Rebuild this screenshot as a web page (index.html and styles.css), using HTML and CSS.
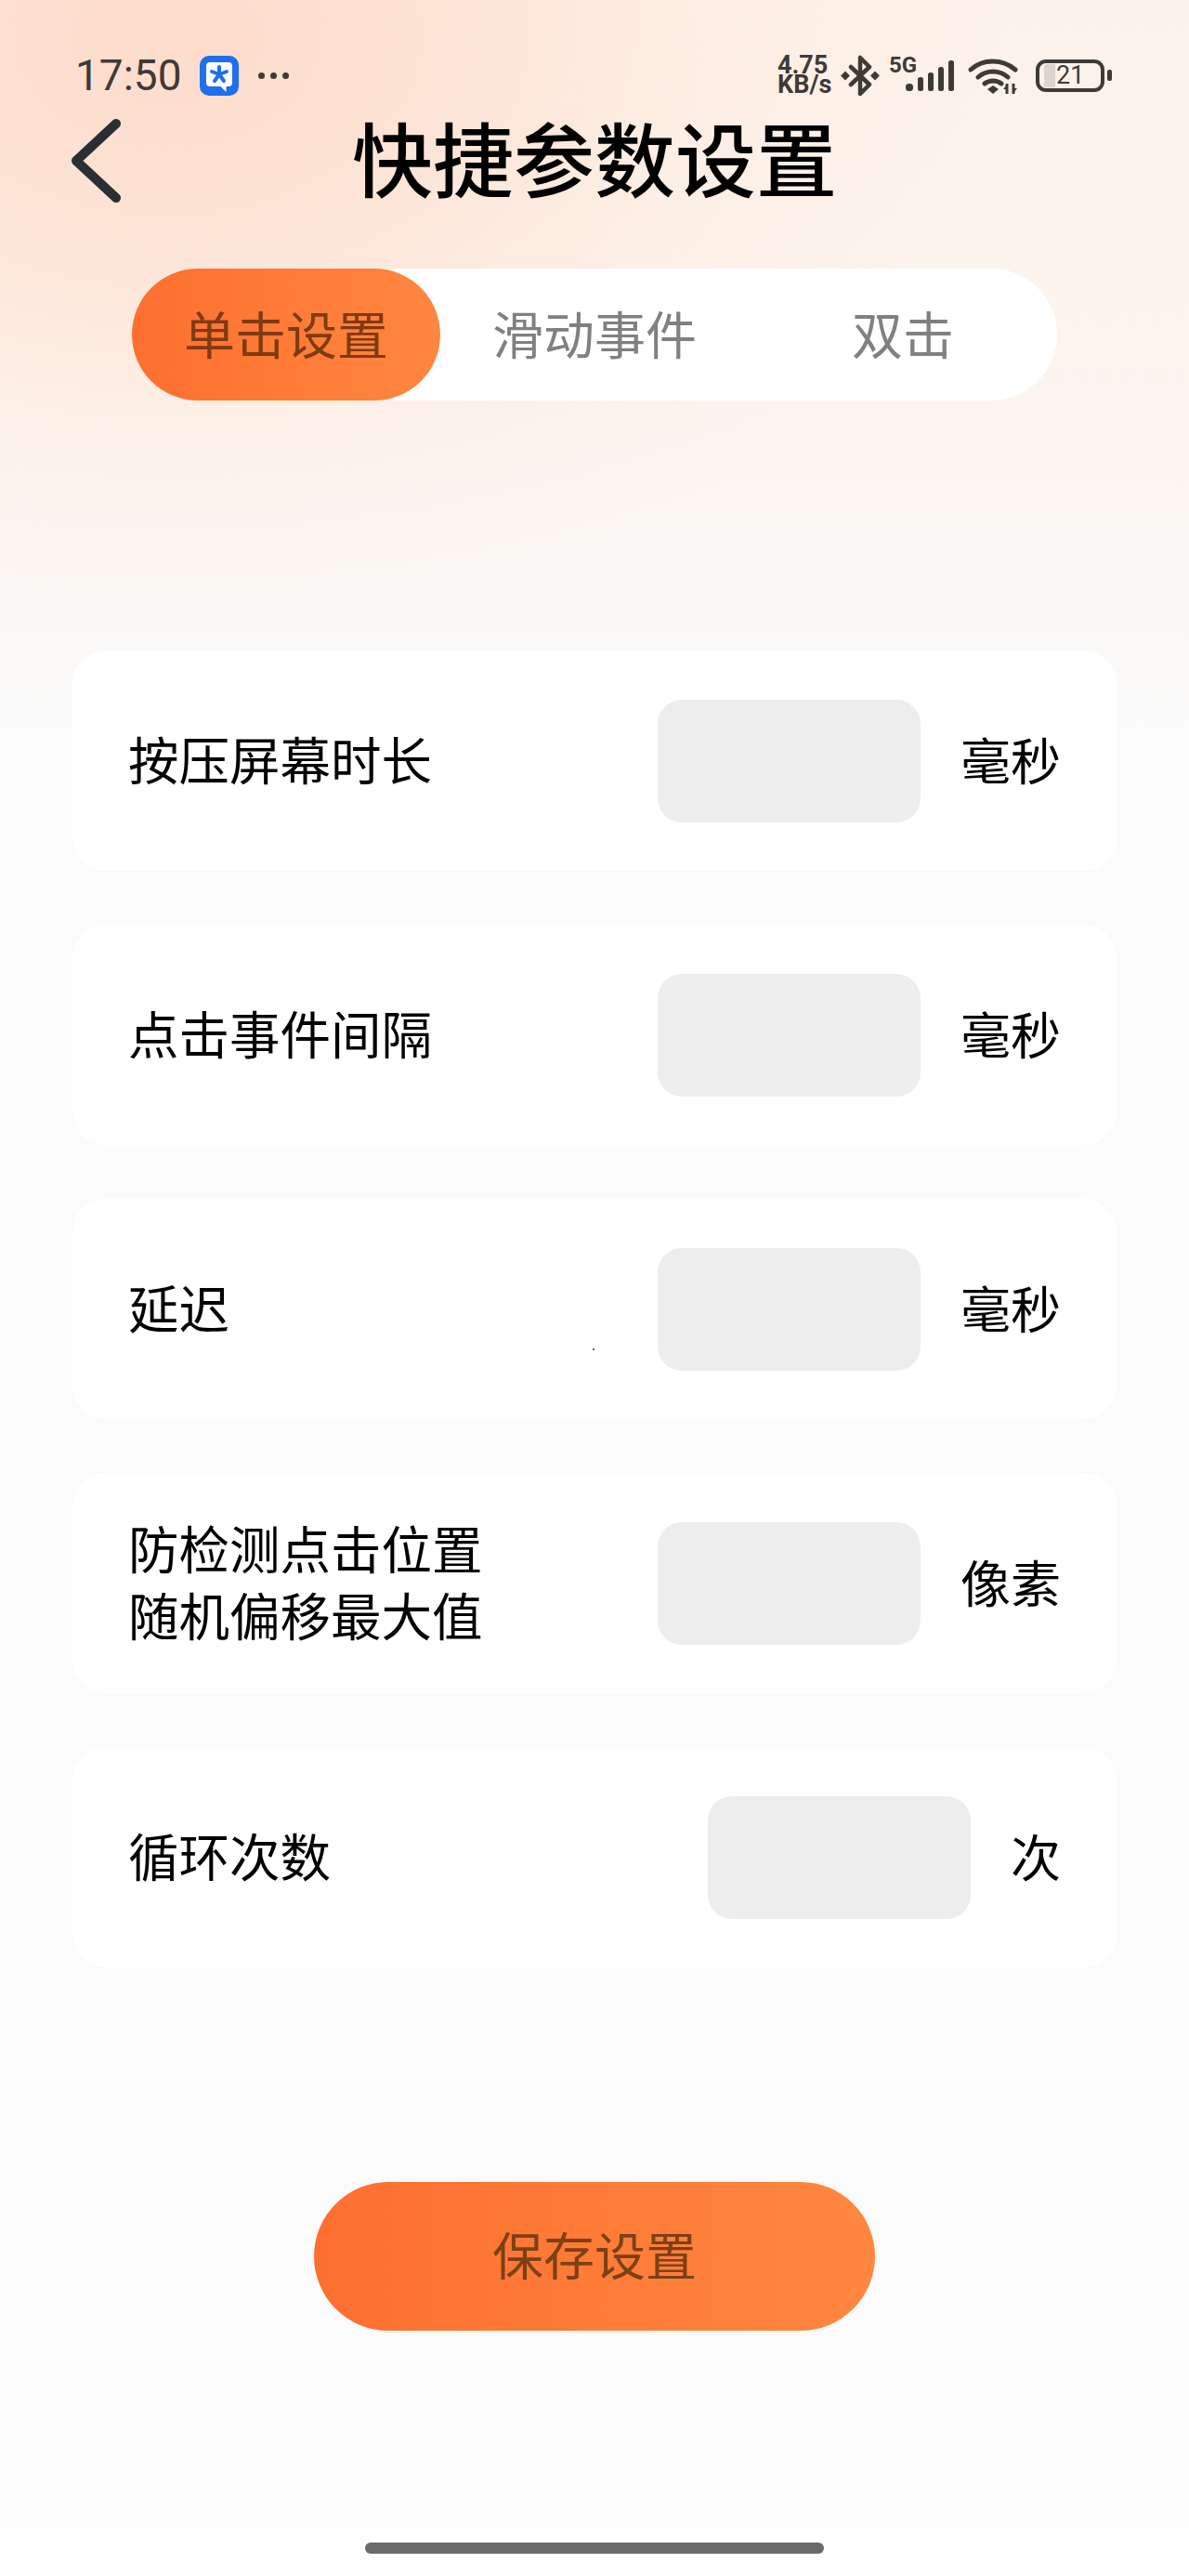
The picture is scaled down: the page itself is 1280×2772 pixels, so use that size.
FILE: index.html
```html
<!DOCTYPE html>
<html lang="zh-CN">
  <head>
    <meta charset="UTF-8" />
    <meta name="viewport" content="width=device-width, initial-scale=1.0" />
    <title>快捷参数设置</title>
    <link rel="stylesheet" href="styles.css">
  </head>
  <body>
    <div class="page">
      <div class="status-bar">
        <div class="status-left">
          <span class="time">17:50</span>
          <svg class="app-icon" viewBox="0 0 42 43">
            <rect width="42" height="43" rx="10" fill="#1f6fee" />
            <path d="M11 7h20a4 4 0 0 1 4 4v18a4 4 0 0 1-4 4h-2.500v6l-6-6H11a4 4 0 0 1-4-4V11a4 4 0 0 1 4-4z" fill="#fff" />
            <path d="M21 20v-8M21 20l-8-3M21 20l8-3M21 20l-5 7M21 20l5 7" stroke="#1f6fee" stroke-width="4" stroke-linecap="round" />
          </svg>
          <span class="dots"><i></i><i></i><i></i></span>
        </div>
        <div class="status-right">
          <span class="speed">4.75<br />KB/s</span>
          <svg class="bluetooth" viewBox="0 0 42 45">
            <path d="M21 3v39l10-10-20-19M21 3l10 10-20 19" fill="none" stroke="#403a35" stroke-width="4.500" stroke-linejoin="round" stroke-linecap="round" />
            <rect x="1.500" y="19" width="7" height="7" transform="rotate(45 5 22.500)" fill="#403a35" />
            <rect x="33.500" y="19" width="7" height="7" transform="rotate(45 37 22.500)" fill="#403a35" />
          </svg>
          <div class="signal">
            <span class="net">5G</span>
            <svg viewBox="0 0 52 33">
              <rect x="0" y="25" width="8" height="8" rx="3.500" fill="#403a35" />
              <rect x="13" y="18" width="6" height="15" rx="2.500" fill="#403a35" />
              <rect x="24" y="13" width="6" height="20" rx="2.500" fill="#403a35" />
              <rect x="35" y="7" width="6" height="26" rx="2.500" fill="#403a35" />
              <rect x="46" y="0" width="6" height="33" rx="2.500" fill="#403a35" />
            </svg>
          </div>
          <svg class="wifi" viewBox="0 0 54 40">
            <path d="M3 14C16 2 37 2 51 14M11 22c9-8 23-8 32 0M18 29c5-4 13-4 18 0" fill="none" stroke="#403a35" stroke-width="5" stroke-linecap="round" />
            <path d="M27 40l-6-5 6-4 6 4z" fill="#403a35" />
            <path d="M42 29v11M49 29v11" stroke="#403a35" stroke-width="3" />
            <path d="M38 35l4-5v5zM53 34l-4 5v-5z" fill="#403a35" />
          </svg>
          <div class="battery">
            <div class="battery-body">
              <span class="battery-level"></span>
              <span class="battery-num">21</span>
            </div>
            <span class="battery-nub"></span>
          </div>
        </div>
      </div>

      <div class="header">
        <svg class="back" viewBox="0 0 54 90">
          <path d="M49 5L6 45l43 40" fill="none" stroke="#2b2e33" stroke-width="10" stroke-linecap="round" stroke-linejoin="round" />
        </svg>
        <h1>快捷参数设置</h1>
      </div>

      <div class="tabs">
        <div class="tab active">单击设置</div>
        <div class="tab">滑动事件</div>
        <div class="tab">双击</div>
      </div>

      <div class="list">
        <div class="card">
          <div class="label">按压屏幕时长</div>
          <div class="field"></div>
          <div class="unit">毫秒</div>
        </div>
        <div class="card">
          <div class="label">点击事件间隔</div>
          <div class="field"></div>
          <div class="unit">毫秒</div>
        </div>
        <div class="card">
          <div class="label">延迟</div>
          <span class="speck"></span>
          <div class="field"></div>
          <div class="unit">毫秒</div>
        </div>
        <div class="card">
          <div class="label">防检测点击位置<br />随机偏移最大值</div>
          <div class="field"></div>
          <div class="unit">像素</div>
        </div>
        <div class="card">
          <div class="label">循环次数</div>
          <div class="field"></div>
          <div class="unit">次</div>
        </div>
      </div>

      <div class="save">保存设置</div>
    </div>

    <div class="nav-bar"><span class="home-bar"></span></div>
  </body>
</html>
```

FILE: styles.css
```css
* {
  box-sizing: border-box;
}
body {
  margin: 0;
  height: 2772px;
  overflow: hidden;
  background-color: #fff;
  color: #000;
  font-family: "Noto Sans CJK SC", "Noto Sans", sans-serif;
  display: flex;
  flex-direction: column;
}
.page {
  height: 2720px;
  padding: 58px 78px 0;
  background-color: #fbfbfb;
  background-image:
    radial-gradient(ellipse 900px 640px at 180px 40px, #fddccb 0%, rgba(253, 224, 208, 0.85) 30%, rgba(253, 232, 220, 0.4) 65%, rgba(253, 236, 226, 0) 100%),
    linear-gradient(180deg, #fdf2ea 0%, #fcf4ed 360px, #fbf8f5 620px, #fbfbfb 800px);
}

/* status bar */
.status-bar {
  display: flex;
  justify-content: space-between;
  align-items: center;
  height: 46px;
  color: #403a35;
}
.status-left {
  display: flex;
  align-items: center;
  margin-left: 3px;
}
.time {
  font-family: Roboto, sans-serif;
  font-size: 46px;
  line-height: 46px;
  width: 134px;
}
.app-icon {
  width: 42px;
  height: 43px;
}
.dots {
  display: flex;
  gap: 6px;
  margin-left: 21px;
}
.dots i {
  width: 7px;
  height: 7px;
  border-radius: 50%;
  background-color: #403a35;
}
.status-right {
  display: flex;
  align-items: center;
  margin-right: 5px;
}
.speed {
  font-family: Roboto, sans-serif;
  font-weight: 700;
  font-size: 27px;
  line-height: 21px;
  width: 68px;
}
.bluetooth {
  width: 42px;
  height: 45px;
}
.signal {
  position: relative;
  width: 52px;
  height: 33px;
  margin-left: 28px;
}
.signal svg {
  display: block;
  width: 52px;
  height: 33px;
}
.net {
  position: absolute;
  left: -18px;
  top: -7px;
  font-family: Roboto, sans-serif;
  font-weight: 700;
  font-size: 24px;
  line-height: 24px;
}
.wifi {
  width: 54px;
  height: 40px;
  margin-left: 15px;
}
.battery {
  display: flex;
  align-items: center;
  margin-left: 19px;
}
.battery-body {
  display: flex;
  align-items: center;
  width: 74px;
  height: 35px;
  padding-left: 5px;
  border: 4px solid #403a35;
  border-radius: 11px;
}
.battery-level {
  width: 12px;
  height: 25px;
  border-radius: 3px 0 0 3px;
  background-color: #ddd5cc;
}
.battery-num {
  margin-left: 1px;
  font-family: Roboto, sans-serif;
  font-size: 27px;
  line-height: 27px;
}
.battery-nub {
  width: 5px;
  height: 12px;
  margin-left: 3px;
  border-radius: 2px;
  background-color: #403a35;
}

/* title row */
.header {
  display: grid;
  grid-template-columns: 1fr auto 1fr;
  align-items: center;
  height: 90px;
  margin-top: 19px;
}
.back {
  width: 54px;
  height: 90px;
  margin-left: -2px;
}
h1 {
  margin: 0 0 10px;
  font-size: 87px;
  font-weight: 500;
  line-height: 90px;
}

/* tabs */
.tabs {
  display: flex;
  width: 996px;
  height: 142px;
  margin: 76px 0 0 64px;
  border-radius: 71px;
  background-color: #fff;
}
.tab {
  flex: 1;
  display: flex;
  align-items: center;
  justify-content: center;
  padding-bottom: 7px;
  border-radius: 71px;
  color: #808080;
  font-size: 55px;
}
.tab.active {
  background-image: linear-gradient(90deg, #fd6f30, #ff873f);
  color: #803a10;
}

/* settings cards */
.list {
  display: flex;
  flex-direction: column;
  gap: 58px;
  margin-top: 269px;
}
.card {
  position: relative;
  display: flex;
  align-items: center;
  height: 237px;
  padding: 0 60px;
  border-radius: 36px;
  background-color: #fff;
}
.label {
  flex: 1;
  padding-bottom: 5px;
  font-size: 54.5px;
  line-height: 72px;
}
.field {
  width: 283px;
  height: 132px;
  border-radius: 26px;
  background-color: #ededed;
}
.unit {
  margin-left: 43px;
  padding-bottom: 5px;
  font-size: 54px;
}
.speck {
  position: absolute;
  left: 560px;
  top: 161px;
  width: 2px;
  height: 2px;
  background-color: #666;
}

.save {
  display: flex;
  align-items: center;
  justify-content: center;
  width: 604px;
  height: 160px;
  margin: 231px auto 0;
  padding-bottom: 8px;
  border-radius: 80px;
  background-image: linear-gradient(90deg, #fd6f30, #ff873f);
  color: #7d4014;
  font-size: 55px;
}

/* gesture bar */
.nav-bar {
  display: flex;
  justify-content: center;
  height: 52px;
  padding-top: 16px;
  background-color: #fff;
}
.home-bar {
  width: 494px;
  height: 12px;
  border-radius: 6px;
  background-color: #6b6b6b;
}
```
